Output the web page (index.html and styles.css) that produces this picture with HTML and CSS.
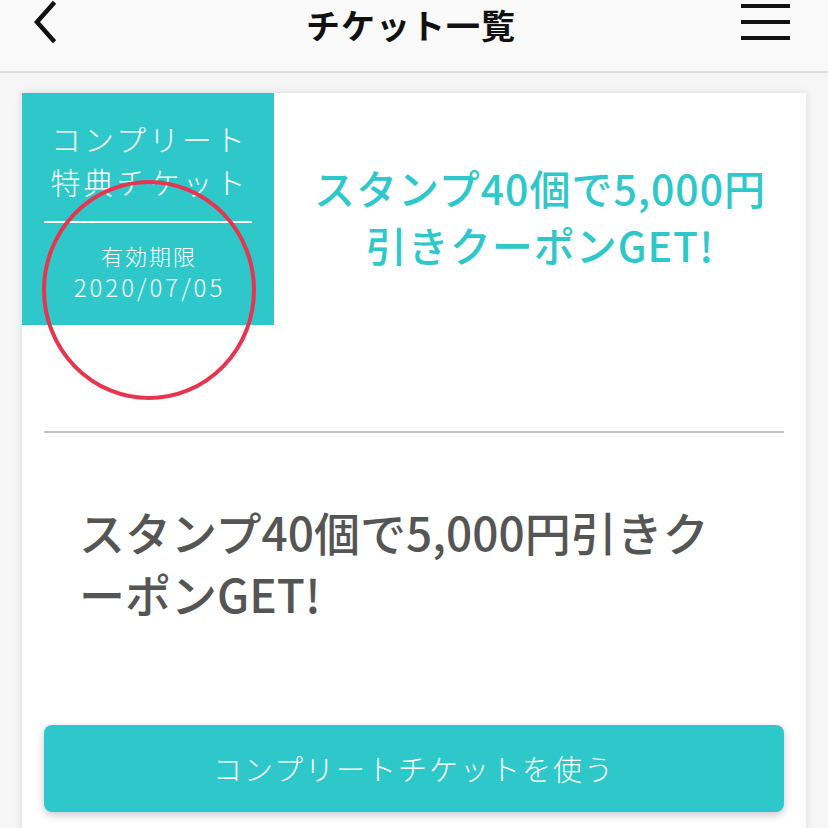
FILE: index.html
```html
<!doctype html>
<html lang="ja">
<head>
    <meta charset="UTF-8">
    <meta name="viewport" content="width=device-width, initial-scale=1.0">
    <title>チケット一覧</title>
    <link rel="stylesheet" href="styles.css">
</head>
<body>
    <!-- header -->
    <div class="header">
        <div class="back">
            <svg width="28" height="44" viewBox="0 0 28 44">
                <path d="M22 4 L6 22 L22 40" fill="none" stroke="#111" stroke-width="4.5" stroke-linecap="square"/>
            </svg>
        </div>
        <div class="title">チケット一覧</div>
        <div class="menu">
            <span></span>
            <span></span>
            <span></span>
        </div>
    </div>

    <!-- ticket -->
    <div class="main">
        <div class="ticket">
            <div class="ticket-top">
                <div class="badge">
                    <div class="badge-name">コンプリート<br>特典チケット</div>
                    <div class="badge-line"></div>
                    <div class="badge-limit">有効期限</div>
                    <div class="badge-date">2020/07/05</div>
                </div>
                <div class="ticket-head">スタンプ40個で5,000円<br>引きクーポンGET!</div>
            </div>
            <div class="ticket-line"></div>
            <div class="ticket-text">スタンプ40個で5,000円引きクーポンGET!</div>
            <div class="ticket-btn">コンプリートチケットを使う</div>

            <!-- mark -->
            <svg class="mark" width="220" height="224" viewBox="0 0 220 224">
                <ellipse cx="110" cy="112" rx="105" ry="108" fill="none" stroke="#e8354f" stroke-width="4"/>
            </svg>
        </div>
    </div>
</body>
</html>
```

FILE: styles.css
```css
* {
    margin: 0;
    padding: 0;
    box-sizing: border-box;
}
body {
    font-family: "Noto Sans CJK JP", "Noto Sans", sans-serif;
    background: #f6f6f6;
    height: 828px;
    overflow: hidden;
}

/*header start*/
.header {
    display: flex;
    align-items: flex-start;
    justify-content: space-between;
    height: 73px;
    padding: 0 38px 0 31px;
    background: #f9f9f9;
    border-bottom: 2px solid #dedede;
}
.header .back {
    width: 50px;
}
.header .title {
    font-size: 34px;
    font-weight: 700;
    line-height: 50px;
    letter-spacing: 1px;
    color: #111;
}
.header .menu {
    display: flex;
    flex-direction: column;
    gap: 12px;
    width: 49px;
    padding-top: 4px;
}
.header .menu span {
    display: block;
    height: 4px;
    background: #111;
}
/*header end*/

/*ticket start*/
.main {
    padding: 20px 22px 0;
}
.ticket {
    position: relative;
    height: 760px;
    background: #fff;
    box-shadow: 0 0 8px rgba(0, 0, 0, .12);
}
.ticket .ticket-top {
    display: flex;
}
.ticket .badge {
    width: 252px;
    height: 232px;
    padding: 24px 22px 0;
    background: #2ec8cb;
    color: #fff;
    text-align: center;
}
.ticket .badge-name {
    font-size: 30px;
    font-weight: 300;
    line-height: 43px;
    letter-spacing: 3px;
    margin-right: -3px;
}
.ticket .badge-line {
    height: 2px;
    margin: 18px 0 17px;
    background: #fff;
}
.ticket .badge-limit {
    font-size: 22px;
    font-weight: 300;
    line-height: 30px;
    letter-spacing: 2px;
    margin-right: -2px;
}
.ticket .badge-date {
    font-size: 24px;
    font-weight: 300;
    line-height: 34px;
    letter-spacing: 3px;
    margin-right: -3px;
}
.ticket .ticket-head {
    flex: 1;
    padding-top: 66px;
    font-size: 41px;
    font-weight: 500;
    line-height: 57px;
    letter-spacing: 1px;
    color: #2ec8cb;
    text-align: center;
}
.ticket .ticket-line {
    height: 2px;
    margin: 106px 22px 0;
    background: #c2c2c2;
}
.ticket .ticket-text {
    padding: 67px 60px 0 57px;
    font-size: 46px;
    font-weight: 500;
    line-height: 62px;
    color: #555;
}
.ticket .ticket-btn {
    height: 87px;
    margin: 101px 22px 0;
    border-radius: 8px;
    background: #2ec8cb;
    box-shadow: 0 3px 8px rgba(0, 0, 0, .22);
    font-size: 29px;
    font-weight: 300;
    line-height: 87px;
    letter-spacing: 2px;
    color: #fff;
    text-align: center;
}
.ticket .mark {
    position: absolute;
    top: 85px;
    left: 17px;
}
/*ticket end*/
```
